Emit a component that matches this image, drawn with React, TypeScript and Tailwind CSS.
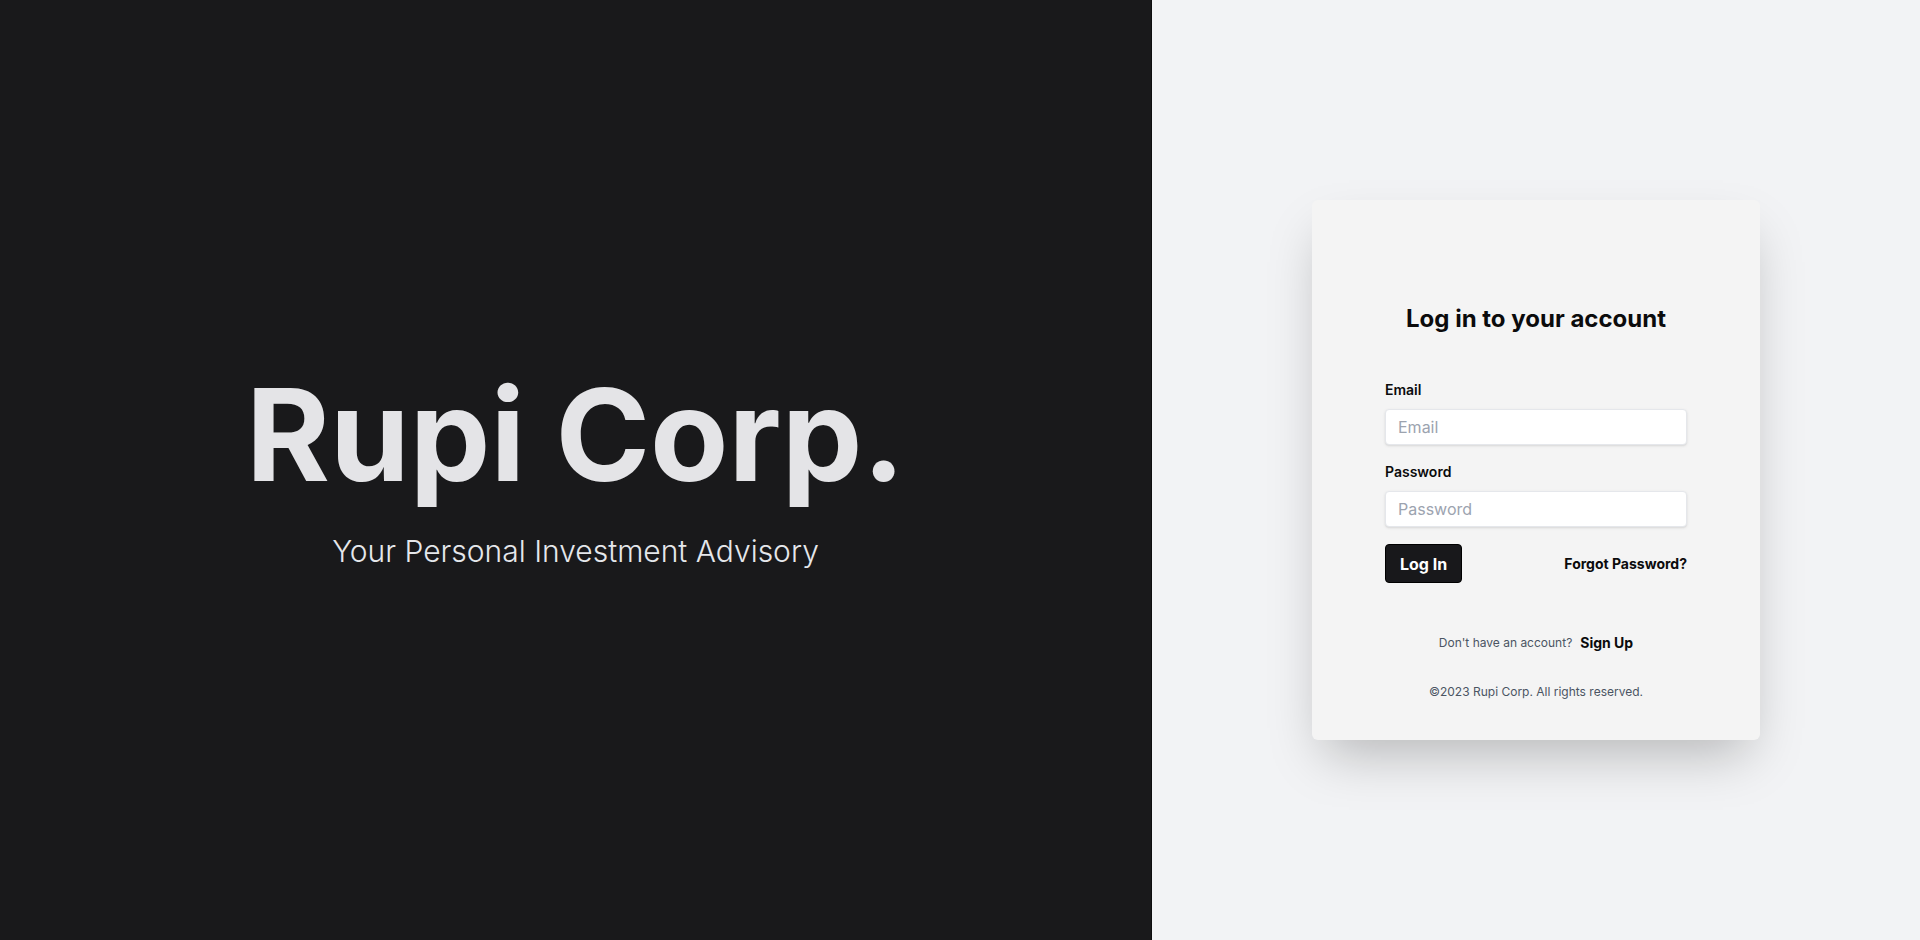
import React from "react";

export default function App() {
  return (
    <div
      className="flex h-screen w-full overflow-hidden"
      style={{ fontFamily: 'Inter, "Noto Sans", sans-serif' }}
    >
      <div className="flex w-[1152px] shrink-0 flex-col items-center justify-center border-r border-[#0e0e0f] bg-[#19191b]">
        <h1 className="text-9xl font-bold leading-none tracking-normal text-[#e4e4e7]">
          Rupi Corp.
        </h1>
        <p className="mt-[34px] text-3xl font-light leading-9 text-[#e5e7eb]">
          Your Personal Investment Advisory
        </p>
      </div>
      <div className="flex flex-1 items-center justify-center bg-[#f2f3f5]">
        <div className="w-[448px] rounded-md bg-[#f4f4f4] px-[73px] pb-[40px] pt-[103px] shadow-2xl">
          <h2 className="text-center text-2xl font-bold leading-8 text-[#0b0b0c]">
            Log in to your account
          </h2>
          <form className="mt-[45px]" onSubmit={(e) => e.preventDefault()}>
            <label className="block text-sm font-semibold leading-5 text-[#0b0b0c]">
              Email
            </label>
            <input
              type="email"
              placeholder="Email"
              className="mt-[9px] block h-[36px] w-full rounded border border-[#e5e7eb] bg-white px-3 text-base text-gray-900 shadow-sm outline-none placeholder:text-[#9ca3af]"
            />
            <label className="mt-[17px] block text-sm font-semibold leading-5 text-[#0b0b0c]">
              Password
            </label>
            <input
              type="password"
              placeholder="Password"
              className="mt-[9px] block h-[36px] w-full rounded border border-[#e5e7eb] bg-white px-3 text-base text-gray-900 shadow-sm outline-none placeholder:text-[#9ca3af]"
            />
            <div className="mt-[17px] flex items-center justify-between">
              <button
                type="submit"
                className="h-[39px] rounded border border-black bg-[#18181b] px-[14px] text-base font-bold text-white"
              >
                Log In
              </button>
              <a className="text-sm font-bold text-[#0b0b0c]">Forgot Password?</a>
            </div>
          </form>
          <p className="mt-[50px] flex items-center justify-center leading-5">
            <span className="text-xs text-[#4b5563]">Don't have an account?</span>
            <a className="ml-2 text-sm font-bold text-[#0b0b0c]">Sign Up</a>
          </p>
          <p className="mt-[31px] text-center text-xs leading-4 text-[#4b5563]">
            ©2023 Rupi Corp. All rights reserved.
          </p>
        </div>
      </div>
    </div>
  );
}
